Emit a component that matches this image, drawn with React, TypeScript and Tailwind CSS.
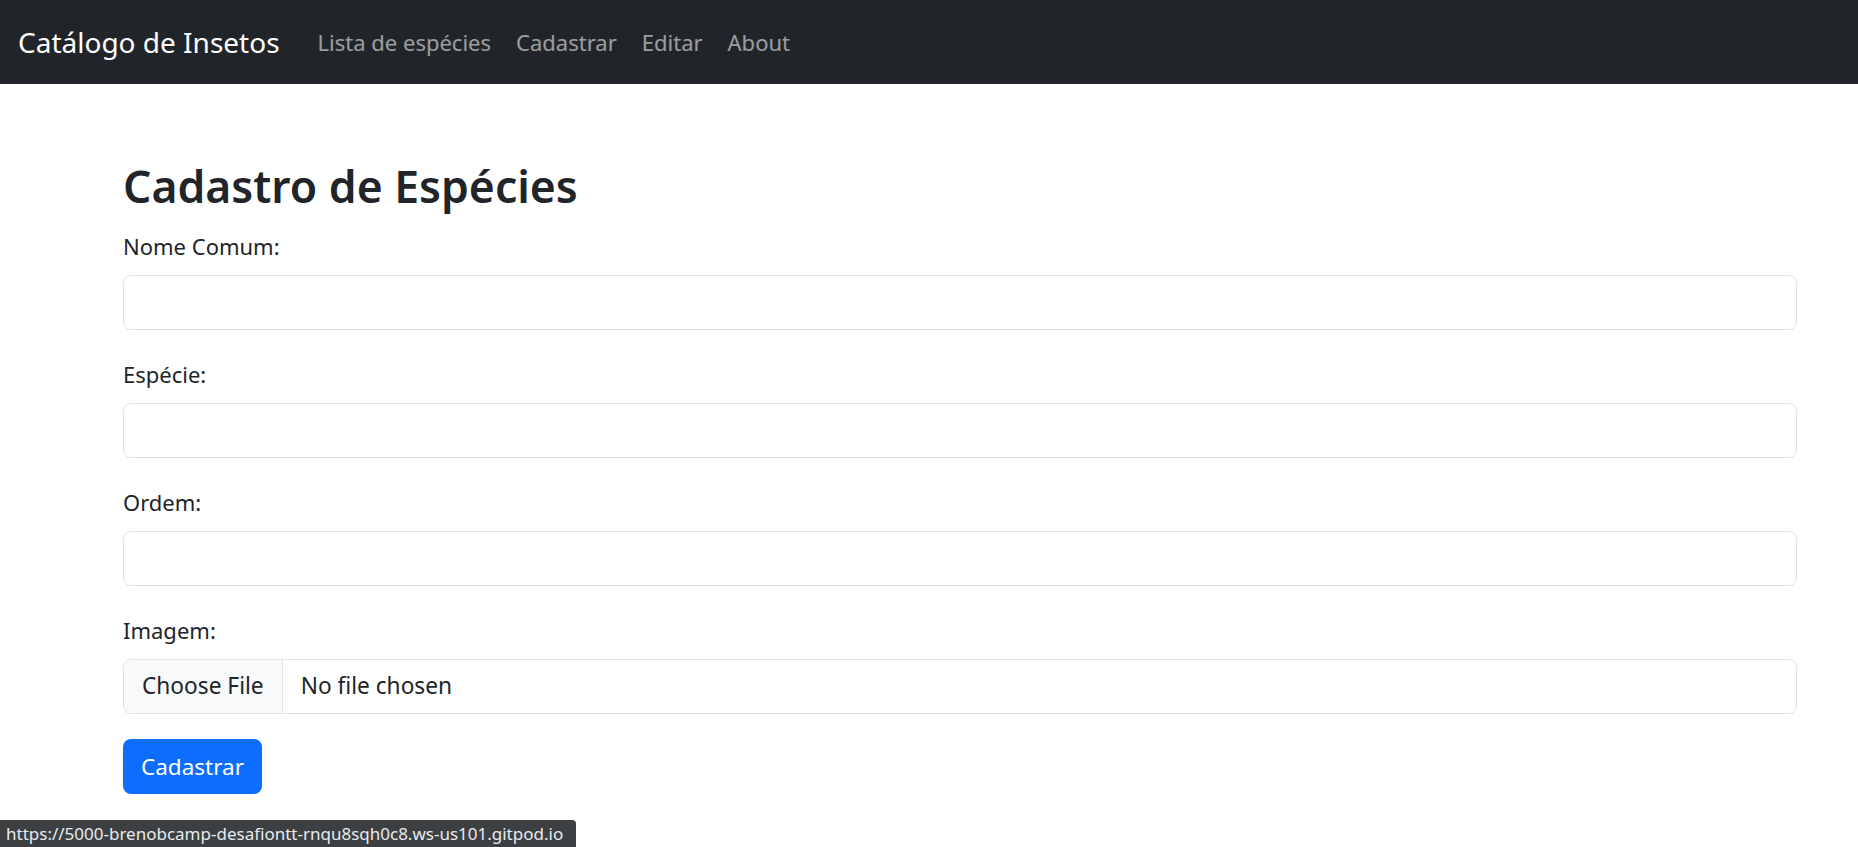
import { useState } from "react";

const font = "font-['Noto_Sans','Open_Sans',sans-serif]";

const links = ["Lista de espécies", "Cadastrar", "Editar", "About"];

function Field({ label }: { label: string }) {
    return (
        <div className="mb-[27px]">
            <label className="block text-[22px] leading-[34px] mb-[12px] text-[#212529]">{label}</label>
            <input
                type="text"
                className="block w-full h-[55px] rounded-[8px] border border-[#dee2e6] bg-white px-[18px] text-[22px] outline-none"
            />
        </div>
    );
}

export default function App() {
    const [fileName] = useState<string | null>(null);

    return (
        <div className={`relative min-h-[847px] bg-white ${font}`}>
            <nav className="h-[84px] bg-[#212529] flex items-center pl-[18px]">
                <span className="text-[28px] text-white mr-[38px]">Catálogo de Insetos</span>
                <div className="flex items-center gap-[25px]">
                    {links.map((l) => (
                        <a key={l} href="#" className="text-[22px] text-white/55">
                            {l}
                        </a>
                    ))}
                </div>
            </nav>

            <main className="pl-[123px] pr-[61px] pt-[76px]">
                <h1 className="text-[44.5px] leading-[52px] font-semibold text-[#212529] mb-[17px]">Cadastro de Espécies</h1>

                <form>
                    <Field label="Nome Comum:" />
                    <Field label="Espécie:" />
                    <Field label="Ordem:" />

                    <div className="mb-[25px]">
                        <label className="block text-[22px] leading-[34px] mb-[12px] text-[#212529]">Imagem:</label>
                        <div className="flex h-[55px] w-full rounded-[8px] border border-[#dee2e6] overflow-hidden text-[22.7px] text-[#212529]">
                            <span className="flex items-center px-[18px] bg-[#f8f9fa] border-r border-[#dee2e6]">Choose File</span>
                            <span className="flex items-center pl-[18px]">{fileName ?? "No file chosen"}</span>
                        </div>
                    </div>

                    <button
                        type="button"
                        className="h-[55px] px-[18px] rounded-[8px] bg-[#0d6efd] text-white text-[22.5px]"
                    >
                        Cadastrar
                    </button>
                </form>
            </main>

            <div className="absolute left-0 bottom-0 h-[27px] w-[576px] bg-[#3c4043] rounded-tr-[4px] px-[6px] flex items-center text-[17px] text-[#e8eaed]">
                https://5000-brenobcamp-desafiontt-rnqu8sqh0c8.ws-us101.gitpod.io
            </div>
        </div>
    );
}
